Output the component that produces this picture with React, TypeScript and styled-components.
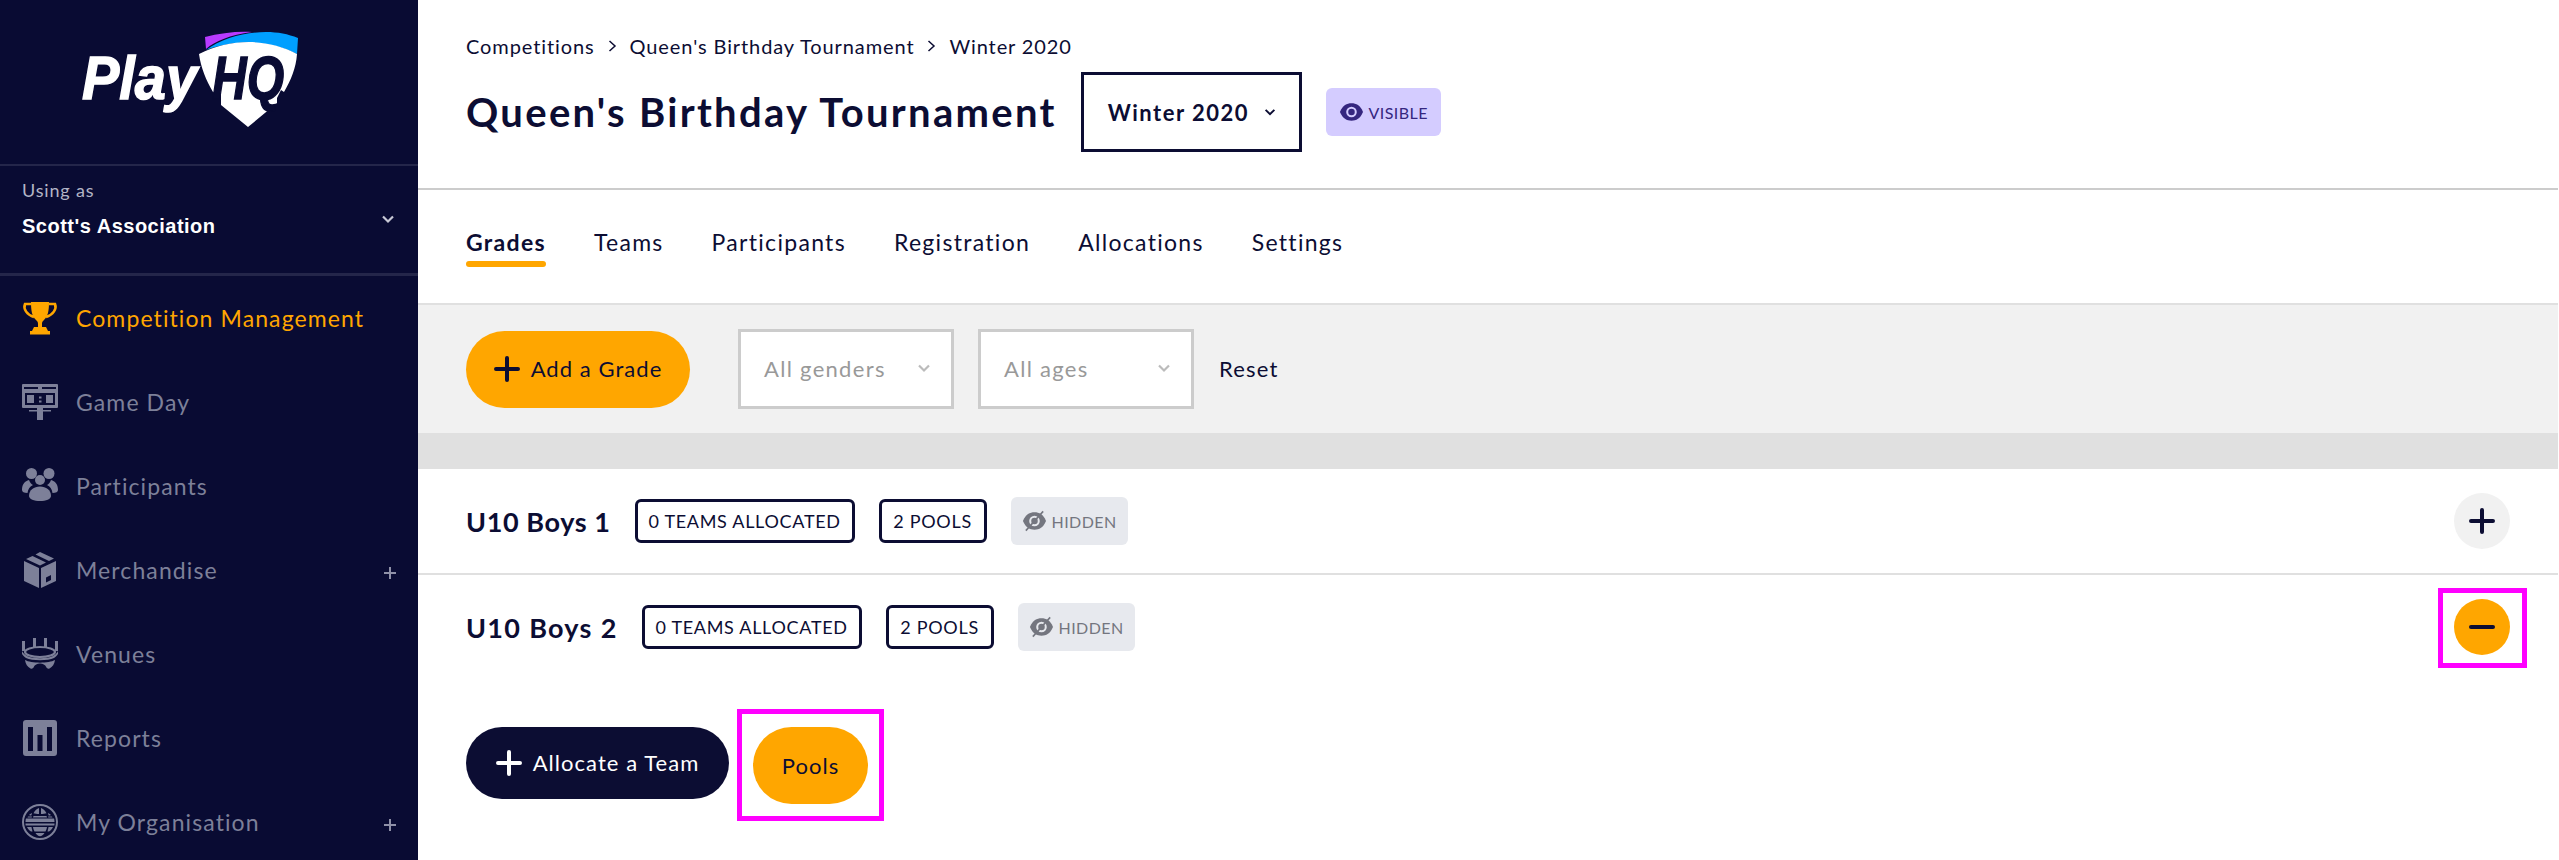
import React from 'react';
import styled, { createGlobalStyle } from 'styled-components';

const FONT = `Lato, "Noto Sans", sans-serif`;
const NAVY = '#0c0d33';
const SIDE = '#090b33';
const ORANGE = '#ffa600';
const MUTED = '#7d8099';

const Global = createGlobalStyle`
  html, body { margin: 0; padding: 0; background: #fff; }
  body { font-family: ${FONT}; color: ${NAVY}; }
  * { box-sizing: border-box; }
`;

const Page = styled.div`
  display: flex; width: 2559px; height: 860px; overflow: hidden; background: #fff;
`;
const Sidebar = styled.aside`
  width: 418px; flex: none; background: ${SIDE}; display: flex; flex-direction: column;
`;
const LogoBox = styled.div`
  height: 166px; padding: 30px 0 0 80px; border-bottom: 2px solid #24264a; flex: none;
`;
const UsingBox = styled.div`
  height: 110px; padding: 12px 22px 0; border-bottom: 3px solid #24264a; flex: none; position: relative;
  display: flex; flex-direction: column;
`;
const UsingLabel = styled.div`
  font-size: 18px; line-height: 24px; color: #b3b5c6; letter-spacing: .85px;
`;
const UsingName = styled.div`
  margin-top: 11px; font: bold 20px/26px "Liberation Sans", sans-serif; color: #fff; letter-spacing: .5px;
`;
const UsingChevron = styled.span`
  position: absolute; right: 22px; top: 45px; display: flex;
`;
const NavList = styled.nav`
  display: flex; flex-direction: column;
`;
const NavItem = styled.div<{ $active?: boolean }>`
  height: 84px; padding: 0 22px; display: flex; align-items: center; gap: 18px;
  font-size: 23px; letter-spacing: 1.1px;
  color: ${p => (p.$active ? ORANGE : MUTED)};
`;
const NavLabel = styled.span`flex: 1;`;
const NavIcon = styled.svg`width: 36px; height: 36px; flex: none; fill: currentColor;`;
const NavPlus = styled.svg`width: 12px; height: 12px; flex: none; stroke: #8f91a8; stroke-width: 2; margin-top: 6px;`;

const Main = styled.main`
  flex: 1; margin-right: 1px; display: flex; flex-direction: column; min-width: 0; position: relative;
`;
const Header = styled.header`
  height: 190px; flex: none; border-bottom: 2px solid #ccc; padding: 34px 48px 0;
`;
const Crumbs = styled.div`
  display: flex; align-items: center; gap: 13px; font-size: 20px; line-height: 24px; letter-spacing: .9px;
`;
const TitleRow = styled.div`
  display: flex; align-items: center; margin-top: 14px;
`;
const Title = styled.h1`
  margin: 0; font-size: 40px; font-weight: 700; line-height: 48px; letter-spacing: 2.3px; color: ${NAVY};
`;
const SeasonSelect = styled.div`
  margin-left: 24px; width: 221px; height: 80px; border: 3px solid ${NAVY};
  display: flex; align-items: center; padding-left: 24px; gap: 14px;
  font-size: 22px; font-weight: 700; letter-spacing: 1.5px;
`;
const Status = styled.div<{ $hidden?: boolean }>`
  width: ${p => (p.$hidden ? 117 : 115)}px; height: 48px; border-radius: 6px; flex: none;
  background: ${p => (p.$hidden ? '#e7e9ee' : '#d4ccff')};
  color: ${p => (p.$hidden ? '#74767f' : '#35267f')};
  display: flex; align-items: center; justify-content: center; gap: 5px;
  font-size: 16px; letter-spacing: .45px;
`;
const VisibleBadge = styled(Status)`margin-left: 24px;`;

const Tabs = styled.div`
  height: 115px; flex: none; border-bottom: 2px solid #e0e0e0; padding: 37px 48px 0; display: flex; gap: 48px; align-items: flex-start;
`;
const Tab = styled.div<{ $active?: boolean }>`
  font-size: 23px; line-height: 30px; letter-spacing: 1.3px; font-weight: ${p => (p.$active ? 700 : 400)};
  position: relative;
  ${p => p.$active ? `&::after { content: ''; position: absolute; left: 0; right: 0; top: 34px; height: 6px; border-radius: 3px; background: ${ORANGE}; }` : ''}
`;
const FilterBar = styled.div`
  height: 128px; flex: none; background: #f1f1f1; padding: 0 48px; display: flex; align-items: center;
`;
const Pill = styled.button<{ $dark?: boolean; $w: number; $h: number }>`
  width: ${p => p.$w}px; height: ${p => p.$h}px; border: 0; border-radius: 40px; flex: none;
  background: ${p => (p.$dark ? NAVY : ORANGE)}; color: ${p => (p.$dark ? '#fff' : NAVY)};
  font-family: ${FONT}; font-size: 22px; letter-spacing: 1.05px;
  display: flex; align-items: center; justify-content: center; gap: 11px; padding: 0 0 1px;
`;
const PlusIcon = styled.svg`width: 26px; height: 26px; fill: none; stroke: currentColor; stroke-width: 4; stroke-linecap: round; flex: none;`;
const Select = styled.div<{ $first?: boolean }>`
  width: 216px; height: 80px; background: #fff; border: 3px solid #ccc; flex: none;
  margin-left: ${p => (p.$first ? 48 : 24)}px; padding: 0 19px 2px 23px; display: flex; align-items: center; justify-content: space-between;
  font-size: 22px; letter-spacing: 1.3px; color: #999;
`;
const Reset = styled.div`margin-left: 25px; padding-bottom: 2px; font-size: 22px; letter-spacing: 1.2px;`;
const Spacer = styled.div`height: 36px; flex: none; background: #e0e0e0;`;
const Row = styled.div<{ $line?: boolean }>`
  height: ${p => (p.$line ? 106 : 104)}px; flex: none; padding: 0 48px; display: flex; align-items: center;
  ${p => (p.$line ? 'border-bottom: 2px solid #e0e0e0;' : '')}
`;
const RowTitle = styled.div<{ $spread: number }>`
  font-size: 27px; font-weight: 700; letter-spacing: ${p => p.$spread}px; margin-right: 24px; flex: none;
`;
const CountBadge = styled.div<{ $w: number }>`
  width: ${p => p.$w}px; height: 44px; border: 3px solid ${NAVY}; border-radius: 6px; margin-right: 24px; flex: none;
  display: flex; align-items: center; justify-content: center; font-size: 18px; letter-spacing: .7px;
`;
const RoundBtn = styled.button<{ $on?: boolean }>`
  width: 56px; height: 56px; border-radius: 50%; border: 0; padding: 0; margin-left: auto; flex: none;
  background: ${p => (p.$on ? ORANGE : '#f1f1f1')}; color: ${NAVY};
  display: flex; align-items: center; justify-content: center;
`;
const Actions = styled.div`
  padding: 48px 48px 0; display: flex; align-items: flex-start; gap: 24px;
`;
const Highlight = styled.div<{ $x: number; $y: number; $w: number; $h: number }>`
  position: absolute; left: ${p => p.$x}px; top: ${p => p.$y}px; width: ${p => p.$w}px; height: ${p => p.$h}px;
  border: 5px solid #ff00ff; pointer-events: none;
`;

const Chevron = ({ color, size = 16 }: { color: string; size?: number }) => (
  <svg width={size} height={size} viewBox="0 0 16 16" fill="none" stroke={color} strokeWidth="2.2" style={{ flex: 'none' }}>
    <path d="M3 5.5 8 10.5 13 5.5" />
  </svg>
);
const CrumbSep = () => (
  <svg width="9" height="14" viewBox="0 0 9 14" fill="none" stroke={NAVY} strokeWidth="1.5"><path d="M1.5 2 7 7 1.5 12" /></svg>
);
const Eye = ({ off }: { off?: boolean }) => (
  <svg width="25" height="22" viewBox="0 0 26 22" style={{ flex: 'none' }}>
    <path fill="currentColor" d="M1 11C4 4 8 2 13 2s9 2 12 9c-3 7-7 9-12 9S4 18 1 11Z" />
    <circle cx="13" cy="11" r="5.500" fill={off ? '#e7e9ee' : '#d4ccff'} />
    <circle cx="13" cy="11" r="3.400" fill="currentColor" />
    {off && <path d="M4 21 22 1" stroke="currentColor" strokeWidth="1.6" />}
  </svg>
);
const Plus = () => <PlusIcon viewBox="0 0 26 26"><path d="M13 2v22M2 13h22" /></PlusIcon>;

const Logo = () => (
  <svg width="225" height="100" viewBox="80 30 225 100">
    <path fill="#b93bff" d="M205 37C220 33 238 31 252 32 230 35 215 41 206 49Z" />
    <path fill="#009fff" d="M206 50C222 38 245 32 266 32 278 32 288 34 298 38L297 54C270 40 236 39 206 50Z" />
    <path fill="#fff" d="M199 54C230 38 268 38 297 54 296 68 291 80 284 92L281 90 277 98V103L248 127 221 105V95L213 92C206 80 201 68 199 54Z" />
    <text x="82" y="99" fontFamily="Liberation Sans" fontWeight="700" fontStyle="italic" fontSize="62" fill="#fff" stroke="#fff" strokeWidth="1.5" textLength="115" lengthAdjust="spacingAndGlyphs">Play</text>
    <text x="212" y="99" fontFamily="Liberation Sans" fontWeight="700" fontStyle="italic" fontSize="62" fill={SIDE} stroke={SIDE} strokeWidth="1.5" textLength="72" lengthAdjust="spacingAndGlyphs">HQ</text>
  </svg>
);

const Trophy = () => (
  <NavIcon viewBox="0 0 36 36">
    <path d="M9 2h18c0 9-1 14-5 18-1.500 1.300-2 2-2 4v3h-4v-3c0-2-.5-2.700-2-4C10 16 9 11 9 2Z" />
    <path fill="none" stroke="currentColor" strokeWidth="2.6" d="M9 4H3c-2 5 2 11 9 13M27 4h6c2 5-2 11-9 13" />
    <path d="M12 27h12l2 4H10zM8 31h20v3.500H8z" />
  </NavIcon>
);
const Score = () => (
  <NavIcon viewBox="0 0 36 36">
    <path fillRule="evenodd" d="M1 0h34a1 1 0 0 1 1 1v22a1 1 0 0 1-1 1H21v2h8v1.500h-8V36h-6v-8.500H7V26h8v-2H1a1 1 0 0 1-1-1V1a1 1 0 0 1 1-1Zm1 3v2h14V3Zm18 0v2h14V3ZM3 9v12h30V9Zm2 2h7v8H5Zm19 0h7v8h-7Zm-7 1.500h2.500v2H17Zm0 4h2.500v2H17Z" />
    <path d="M7 12.500h3v5H7zM26 12.500h3v5h-3z" opacity=".55" />
  </NavIcon>
);
const People = () => (
  <NavIcon viewBox="0 0 36 36">
    <circle cx="9.500" cy="5.500" r="5.500" /><circle cx="27" cy="5.500" r="5.500" />
    <path d="M0 22c0-6 3-9 7-10 1 3 3 4.500 4 5-3 1.500-5 4-5.500 8C2 25 0 24 0 22ZM36 22c0-6-3-9-7-10-1 3-3 4.500-4 5 3 1.500 5 4 5.500 8 3.500 0 5.500-1 5.500-3Z" />
    <circle cx="18" cy="12" r="5" />
    <path d="M7 28c0-6 5-9.500 11-9.500S29 22 29 28c0 3-5 5-11 5S7 31 7 28Z" />
  </NavIcon>
);
const BoxIcon = () => (
  <NavIcon viewBox="0 0 36 36">
    <path d="M18 0 32 6.500 27 9 13.500 2.500ZM10.500 4 24 10.500 18 13.500 4 7Z" />
    <path fillRule="evenodd" d="M2 9l15 7v20L2 29ZM34 9 19 16v20l15-7ZM24 25.500l5-2.500v5l-5 2.500Z" />
  </NavIcon>
);
const Stadium = () => (
  <NavIcon viewBox="0 0 36 36">
    <path d="M0 5h3v10H0zM11 2h3v9h-3zM22 2h3v9h-3zM33 5h3v10h-3z" />
    <ellipse cx="18" cy="16" rx="15" ry="5" fill="none" stroke="currentColor" strokeWidth="2.200" />
    <path d="M0 15c1 2 3 4 5 5 6 3 20 3 26 0 2-1 4-3 5-5v3c-1 1-2 3-4 4-6 3-22 3-28 0-2-1-3-3-4-4Z" />
    <path d="M3 24c6 3.500 24 3.500 30 0-.5 4-2.500 7-5.500 8.500-1.500.5-2.500 0-3-1-1.500-3-3.500-4-6.500-4s-5 1-6.500 4c-.5 1-1.500 1.500-3 1C5.500 31 3.500 28 3 24Z" />
  </NavIcon>
);
const Bars = () => (
  <NavIcon viewBox="0 0 36 36">
    <path fillRule="evenodd" d="M4 0h28a3 3 0 0 1 3 3v30a3 3 0 0 1-3 3H4a3 3 0 0 1-3-3V3a3 3 0 0 1 3-3Zm2 7v24h5V7Zm9.500 8v16h5V15Zm9.500-8v24h5V7Z" />
  </NavIcon>
);
const Globe = () => (
  <NavIcon viewBox="0 0 36 36">
    <path fillRule="evenodd" d="M18 0a18 18 0 1 1 0 36 18 18 0 0 1 0-36Zm0 2a16 16 0 1 0 0 32 16 16 0 0 0 0-32Z" />
    <path d="M17 4v6c-2 0-4-.3-5.500-.8C13 6.500 15 4.500 17 4ZM19 4c2 .5 4 2.500 5.500 5.200-1.500.5-3.500.8-5.500.8ZM3.500 19.500h29c0 1 0 1.500-.2 2H3.700c-.2-.5-.2-1-.2-2ZM4 14.500h28c.2.5.4 1 .5 3.500h-29c.1-2.500.3-3 .5-3.500ZM11.500 12h13l.5 1.500H11ZM6 12.500h4l-.3 1H5.500ZM26 12.500h4l.5 1h-4.200ZM11 23h14c-.2 2-1 3-1.500 4.500h-11C12 26 11.200 25 11 23ZM5 23h4.500c.2 1.500.6 3 1 4.500H9C7.500 26.500 6 25 5 23ZM26.500 23H31c-1 2-2.500 3.500-4 4.500h-1.500c.4-1.500.8-3 1-4.500ZM13.500 29h9c-1 2-3 3.200-4.500 3.200S14.500 31 13.500 29ZM26 9.200c.7 0 1.700.6 3 1.800-1 .5-1.600.6-2.300.6-.2-.8-.4-1.600-.7-2.400ZM10 9.200c-.7 0-1.700.6-3 1.800 1 .5 1.600.6 2.300.6.2-.8.4-1.600.7-2.400Z" />
  </NavIcon>
);
const SmallPlus = () => <NavPlus viewBox="0 0 12 12"><path d="M6 0v12M0 6h12" /></NavPlus>;

const nav = [
  { label: 'Competition Management', icon: <Trophy />, active: true },
  { label: 'Game Day', icon: <Score /> },
  { label: 'Participants', icon: <People /> },
  { label: 'Merchandise', icon: <BoxIcon />, plus: true },
  { label: 'Venues', icon: <Stadium /> },
  { label: 'Reports', icon: <Bars /> },
  { label: 'My Organisation', icon: <Globe />, plus: true },
];
const tabs = ['Grades', 'Teams', 'Participants', 'Registration', 'Allocations', 'Settings'];

export default function App() {
  return (
    <Page>
      <Global />
      <Sidebar>
        <LogoBox><Logo /></LogoBox>
        <UsingBox>
          <UsingLabel>Using as</UsingLabel>
          <UsingName>Scott's Association</UsingName>
          <UsingChevron><Chevron color="#c8c9d6" /></UsingChevron>
        </UsingBox>
        <NavList>
          {nav.map(n => (
            <NavItem key={n.label} $active={n.active}>
              {n.icon}
              <NavLabel>{n.label}</NavLabel>
              {n.plus && <SmallPlus />}
            </NavItem>
          ))}
        </NavList>
      </Sidebar>
      <Main>
        <Header>
          <Crumbs>
            <span>Competitions</span><CrumbSep />
            <span>Queen's Birthday Tournament</span><CrumbSep />
            <span>Winter 2020</span>
          </Crumbs>
          <TitleRow>
            <Title>Queen's Birthday Tournament</Title>
            <SeasonSelect>Winter 2020 <Chevron color={NAVY} size={14} /></SeasonSelect>
            <VisibleBadge><Eye />VISIBLE</VisibleBadge>
          </TitleRow>
        </Header>
        <Tabs>
          {tabs.map((t, i) => <Tab key={t} $active={i === 0}>{t}</Tab>)}
        </Tabs>
        <FilterBar>
          <Pill $w={224} $h={77}><Plus />Add a Grade</Pill>
          <Select $first>All genders <Chevron color="#bbb" /></Select>
          <Select>All ages <Chevron color="#bbb" /></Select>
          <Reset>Reset</Reset>
        </FilterBar>
        <Spacer />
        <Row $line>
          <RowTitle $spread={0.6}>U10 Boys 1</RowTitle>
          <CountBadge $w={220}>0 TEAMS ALLOCATED</CountBadge>
          <CountBadge $w={108}>2 POOLS</CountBadge>
          <Status $hidden><Eye off />HIDDEN</Status>
          <RoundBtn><Plus /></RoundBtn>
        </Row>
        <Row>
          <RowTitle $spread={1.3}>U10 Boys 2</RowTitle>
          <CountBadge $w={220}>0 TEAMS ALLOCATED</CountBadge>
          <CountBadge $w={108}>2 POOLS</CountBadge>
          <Status $hidden><Eye off />HIDDEN</Status>
          <RoundBtn $on>
            <PlusIcon viewBox="0 0 26 26"><path d="M2 13h22" /></PlusIcon>
          </RoundBtn>
        </Row>
        <Actions>
          <Pill $dark $w={263} $h={72}><Plus />Allocate a Team</Pill>
          <Pill $w={115} $h={77}>Pools</Pill>
        </Actions>
        <Highlight $x={319} $y={709} $w={147} $h={112} />
        <Highlight $x={2020} $y={588} $w={89} $h={80} />
      </Main>
    </Page>
  );
}
